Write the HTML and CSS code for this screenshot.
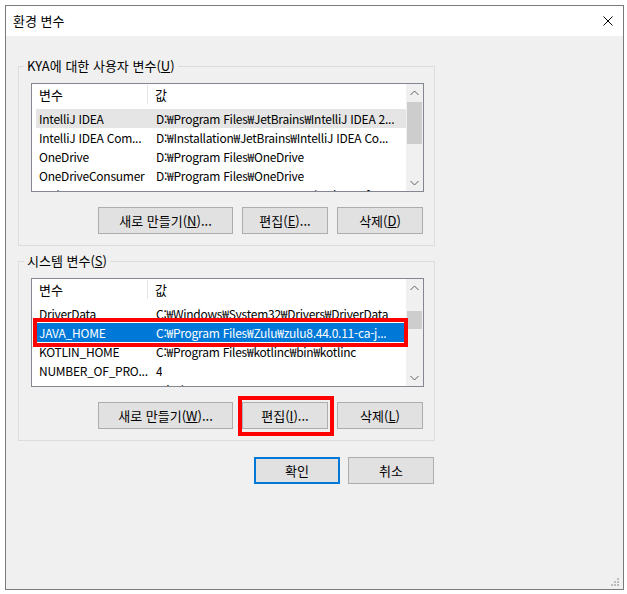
FILE: index.html
```html
<!DOCTYPE html>
<html lang="ko">
<head>
<meta charset="utf-8">
<title>환경 변수</title>
<link rel="stylesheet" href="styles.css">
</head>
<body>
<div class="window">
  <div class="titlebar">
    <span class="title">환경 변수</span>
    <svg class="close" width="10" height="10" viewBox="0 0 10 10"><path d="M0.5 0.5L9.5 9.5M9.5 0.5L0.5 9.5" stroke="#000" stroke-width="1" fill="none"/></svg>
  </div>
  <div class="client">
    <div class="group">
      <div class="group-label">KYA에 대한 사용자 변수(<u>U</u>)</div>
      <div class="listview">
        <div class="lv-body">
          <div class="lv-header"><span class="h1">변수</span><span class="h2">값</span></div>
          <div class="row sel-inactive"><span class="c1">IntelliJ IDEA</span><span class="c2">D:₩Program Files₩JetBrains₩IntelliJ IDEA 2...</span></div>
          <div class="row"><span class="c1">IntelliJ IDEA Com...</span><span class="c2">D:₩Installation₩JetBrains₩IntelliJ IDEA Co...</span></div>
          <div class="row"><span class="c1">OneDrive</span><span class="c2">D:₩Program Files₩OneDrive</span></div>
          <div class="row"><span class="c1">OneDriveConsumer</span><span class="c2">D:₩Program Files₩OneDrive</span></div>
          <div class="row"><span class="c1">Path</span><span class="c2">C:₩Users₩KYA₩AppData₩Local₩Microsoft</span></div>
        </div>
        <div class="scrollbar">
          <div class="sb-btn"><svg width="9" height="6" viewBox="0 0 9 6"><path d="M0.5 5L4.5 1L8.5 5" stroke="#606060" fill="none"/></svg></div>
          <div class="sb-track"><div class="thumb thumb-user"></div></div>
          <div class="sb-btn"><svg width="9" height="6" viewBox="0 0 9 6"><path d="M0.5 1L4.5 5L8.5 1" stroke="#606060" fill="none"/></svg></div>
        </div>
      </div>
      <div class="btnrow">
        <button class="btn wide">새로 만들기(<u>N</u>)...</button>
        <button class="btn">편집(<u>E</u>)...</button>
        <button class="btn">삭제(<u>D</u>)</button>
      </div>
    </div>

    <div class="group second">
      <div class="group-label">시스템 변수(<u>S</u>)</div>
      <div class="listview">
        <div class="lv-body">
          <div class="lv-header"><span class="h1">변수</span><span class="h2">값</span></div>
          <div class="row"><span class="c1">DriverData</span><span class="c2">C:₩Windows₩System32₩Drivers₩DriverData</span></div>
          <div class="row sel"><span class="c1">JAVA_HOME</span><span class="c2">C:₩Program Files₩Zulu₩zulu8.44.0.11-ca-j...</span></div>
          <div class="row"><span class="c1">KOTLIN_HOME</span><span class="c2">C:₩Program Files₩kotlinc₩bin₩kotlinc</span></div>
          <div class="row"><span class="c1">NUMBER_OF_PRO...</span><span class="c2">4</span></div>
          <div class="row"><span class="c1">OS</span><span class="c2">Windows_NT</span></div>
        </div>
        <div class="scrollbar">
          <div class="sb-btn"><svg width="9" height="6" viewBox="0 0 9 6"><path d="M0.5 5L4.5 1L8.5 5" stroke="#606060" fill="none"/></svg></div>
          <div class="sb-track"><div class="thumb thumb-sys"></div></div>
          <div class="sb-btn"><svg width="9" height="6" viewBox="0 0 9 6"><path d="M0.5 1L4.5 5L8.5 1" stroke="#606060" fill="none"/></svg></div>
        </div>
      </div>
      <div class="btnrow">
        <button class="btn wide">새로 만들기(<u>W</u>)...</button>
        <button class="btn">편집(<u>I</u>)...</button>
        <button class="btn">삭제(<u>L</u>)</button>
      </div>
    </div>

    <div class="dlg-buttons">
      <button class="btn default">확인</button>
      <button class="btn">취소</button>
    </div>
  </div>

  <div class="mark mark-row"></div>
  <div class="mark mark-btn"></div>

  <svg class="grip" width="8" height="8" viewBox="0 0 8 8">
    <rect x="6" y="0" width="2" height="2" fill="#bcbcbc"/>
    <rect x="3" y="3" width="2" height="2" fill="#bcbcbc"/>
    <rect x="6" y="3" width="2" height="2" fill="#bcbcbc"/>
    <rect x="0" y="6" width="2" height="2" fill="#bcbcbc"/>
    <rect x="3" y="6" width="2" height="2" fill="#bcbcbc"/>
    <rect x="6" y="6" width="2" height="2" fill="#bcbcbc"/>
  </svg>
</div>
</body>
</html>
```
FILE: styles.css
```css
html, body {
  margin: 0;
  padding: 0;
  background: #ffffff;
}
body {
  font-family: "Noto Sans CJK KR", "Noto Sans", sans-serif;
  font-size: 13px;
  color: #000;
}
.window {
  position: relative;
  margin: 5px 0 0 5px;
  width: 619px;
  height: 585px;
  box-sizing: border-box;
  border: 1px solid #7a7a7a;
  background: #f0f0f0;
}
.titlebar {
  height: 30px;
  background: #ffffff;
  display: flex;
  align-items: center;
  justify-content: space-between;
  padding: 0 10px 0 7px;
}
.title {
  line-height: 16px;
}
.close {
  display: block;
}
.client {
  padding: 30px 0 0 12px;
}
.group {
  width: 417px;
  box-sizing: border-box;
  border: 1px solid #dcdcdc;
  padding: 0 10px 11px 12px;
}
.group.second {
  margin-top: 15px;
}
.group-label {
  width: max-content;
  margin: -9px 0 0 -7px;
  padding: 0 3px;
  height: 16px;
  line-height: 16px;
  background: #f0f0f0;
}
.listview {
  margin-top: 9px;
  width: 393px;
  height: 109px;
  box-sizing: border-box;
  border: 1px solid #828790;
  background: #ffffff;
  display: flex;
  overflow: hidden;
}
.lv-body {
  flex: 1;
  overflow: hidden;
}
.lv-header {
  height: 25px;
  display: flex;
  align-items: flex-start;
}
.h1 {
  width: 116px;
  height: 19px;
  margin-top: 1px;
  box-sizing: border-box;
  padding-left: 7px;
  line-height: 19px;
  border-right: 1px solid #e5e5e5;
}
.h2 {
  padding-left: 7px;
  line-height: 21px;
}
.row {
  height: 19px;
  line-height: 19px;
  margin-left: 4px;
  display: flex;
  white-space: nowrap;
  font-size: 12px;
  letter-spacing: -0.25px;
}
.c1 {
  width: 112px;
  flex: none;
  box-sizing: border-box;
  padding-left: 3px;
  overflow: hidden;
}
.c2 {
  padding-left: 8px;
  overflow: hidden;
}
.row.sel-inactive {
  background: #e5e5e5;
}
.row.sel {
  background: #0078d7;
  color: #ffffff;
}
.scrollbar {
  width: 17px;
  flex: none;
  display: flex;
  flex-direction: column;
  background: #f0f0f0;
}
.sb-btn {
  height: 17px;
  display: flex;
  align-items: center;
  justify-content: center;
}
.sb-track {
  flex: 1;
  padding: 0 1px;
}
.thumb {
  background: #cdcdcd;
}
.thumb-user {
  margin-top: 1px;
  height: 42px;
}
.thumb-sys {
  margin-top: 15px;
  height: 18px;
}
.btnrow {
  margin-top: 15px;
  margin-right: 1px;
  display: flex;
  justify-content: flex-end;
  gap: 9px;
}
.btn {
  width: 86px;
  height: 27px;
  box-sizing: border-box;
  border: 1px solid #adadad;
  background: #e1e1e1;
  font-family: inherit;
  font-size: 13px;
  color: #000;
  padding: 0;
  line-height: 16px;
}
.btn.wide {
  width: 135px;
}
.btn.default {
  border: 2px solid #0078d7;
}
.dlg-buttons {
  width: 417px;
  box-sizing: border-box;
  margin-top: 16px;
  padding-right: 1px;
  display: flex;
  justify-content: flex-end;
  gap: 8px;
}
.mark {
  position: absolute;
  box-sizing: border-box;
  border: 4px solid #ff0000;
}
.mark-row {
  left: 27px;
  top: 312px;
  width: 375px;
  height: 29px;
}
.mark-btn {
  left: 232px;
  top: 390px;
  width: 96px;
  height: 40px;
}
.grip {
  position: absolute;
  right: 4px;
  bottom: 3px;
}
```
